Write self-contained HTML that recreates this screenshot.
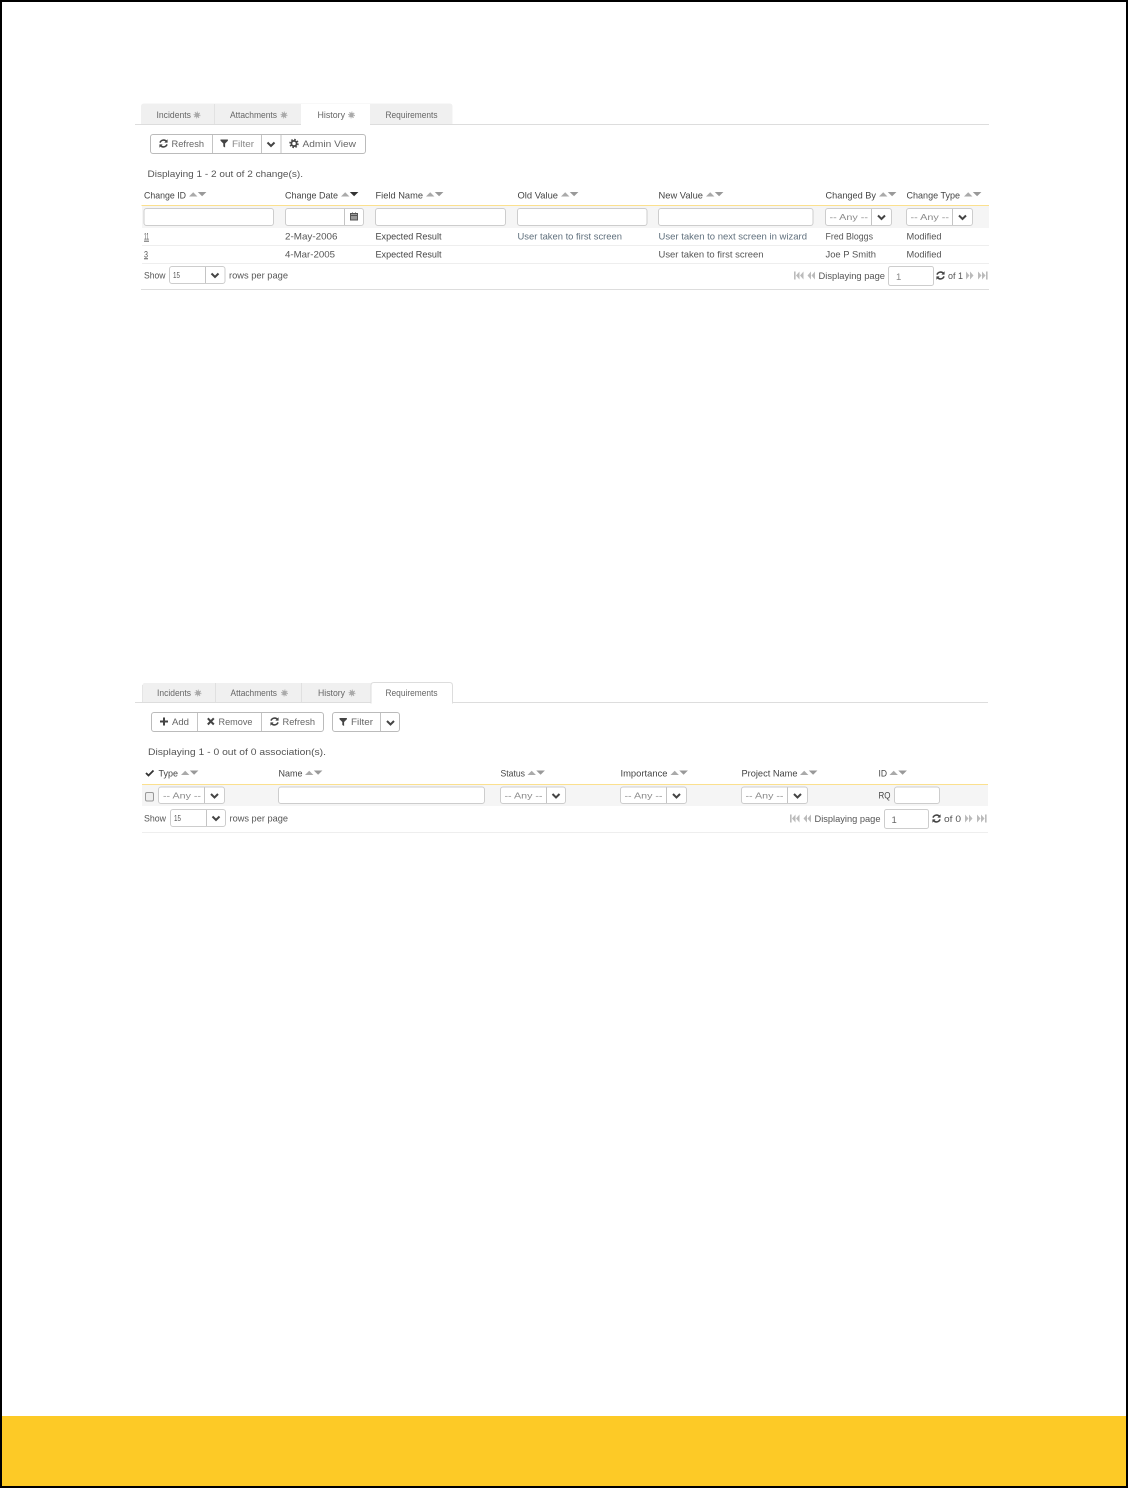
<!DOCTYPE html>
<html><head><meta charset="utf-8"><title>History and Requirements</title>
<style>
html,body{margin:0;padding:0;background:#fff}
svg{display:block}
text{font-family:"Liberation Sans",sans-serif;font-size:9.5px;fill:#555}
.t{fill:#666}.h{fill:#444}.b{fill:#444}.g{fill:#888}.k{fill:#666}
.any{font-size:8.6px;fill:#888}
.box{fill:#fff;stroke:#cdcdcd;stroke-width:1}
.btn{fill:#fff;stroke:#bbb;stroke-width:1}
.sep{stroke:#c4c4c4;stroke-width:1}
.ln{stroke:#ddd;stroke-width:1}
.rw{stroke:#eee;stroke-width:1}
.yl{stroke:#fbe08e;stroke-width:1}
.tab{fill:#f0f0f0}
</style></head>
<body>
<svg width="1128" height="1488" viewBox="0 0 1128 1488" xmlns="http://www.w3.org/2000/svg">
<defs>
<g id="sort"><path d="M0 4.5L4.2 0.2L8.4 4.5Z" fill="#aaa"/><path d="M8.8 0H17.4L13.1 4.3Z" fill="#999"/></g>
<g id="sortd"><path d="M0 4.5L4.2 0.2L8.4 4.5Z" fill="#aaa"/><path d="M8.8 0H17.4L13.1 4.3Z" fill="#333"/></g>
<path id="chev" d="M1 1L4.5 4.5L8 1" fill="none" stroke="#444" stroke-width="2"/>
<g id="ref" fill="none" stroke="#444" stroke-width="1.6"><path d="M1 3.6A3.8 3.8 0 0 1 7.6 2.6"/><path d="M8 5.4A3.8 3.8 0 0 1 1.4 6.4"/><path d="M8.6 0.3V3.6H5.4Z" fill="#444" stroke="none"/><path d="M0.4 8.7V5.4H3.6Z" fill="#444" stroke="none"/></g>
<path id="fil" d="M0 0H7.4V1.2L4.6 4V8L2.8 7V4L0 1.2Z" fill="#444"/>
<g id="gear"><circle cx="4.5" cy="4.5" r="2.6" fill="none" stroke="#444" stroke-width="1.7"/><circle cx="4.5" cy="4.5" r="4" fill="none" stroke="#444" stroke-width="1.4" stroke-dasharray="1.6 1.55"/></g>
<g id="tg"><circle cx="3" cy="3" r="2.3" fill="#aaa"/><circle cx="3" cy="3" r="2.9" fill="none" stroke="#aaa" stroke-width="1" stroke-dasharray="1.1 1.1"/></g>
<g id="first" fill="#bbb"><rect x="0" y="0" width="1.6" height="8"/><path d="M5.5 0V8L2 4Z"/><path d="M9.5 0V8L6 4Z"/></g>
<g id="prev" fill="#bbb"><path d="M4 0V8L0.5 4Z"/><path d="M8 0V8L4.5 4Z"/></g>
<g id="next" fill="#bbb"><path d="M0 0V8L3.5 4Z"/><path d="M4 0V8L7.5 4Z"/></g>
<g id="last" fill="#bbb"><path d="M0 0V8L3.5 4Z"/><path d="M4 0V8L7.5 4Z"/><rect x="8" y="0" width="1.6" height="8"/></g>
</defs>

<!-- frame -->
<rect x="0" y="1416" width="1128" height="72" fill="#fdca26"/>
<rect x="0" y="0" width="1128" height="2" fill="#000"/>
<rect x="0" y="1486" width="1128" height="2" fill="#000"/>
<rect x="0" y="0" width="2" height="1488" fill="#000"/>
<rect x="1126" y="0" width="2" height="1488" fill="#000"/>

<!-- FIRST PANEL -->
<path class="tab" d="M141 124V106.5Q141 103.5 144 103.5H449.5Q452.5 103.5 452.5 106.5V124Z"/>
<rect x="301" y="104" width="69" height="21" fill="#fff"/>
<path d="M214.5 104V124" class="sep" stroke-opacity=".3"/>
<line x1="135" y1="124.5" x2="301" y2="124.5" class="ln"/><line x1="370" y1="124.5" x2="989" y2="124.5" class="ln"/>
<text class="t" x="156.5" y="118" textLength="34.5" lengthAdjust="spacingAndGlyphs">Incidents</text><use href="#tg" x="194" y="112"/>
<text class="t" x="230" y="118" textLength="47" lengthAdjust="spacingAndGlyphs">Attachments</text><use href="#tg" x="281" y="112"/>
<text class="t" x="317.5" y="118" textLength="27.5" lengthAdjust="spacingAndGlyphs">History</text><use href="#tg" x="348.5" y="112"/>
<text class="t" x="385.5" y="118" textLength="52" lengthAdjust="spacingAndGlyphs">Requirements</text>

<rect class="btn" x="150.5" y="134.5" width="215" height="19" rx="2.5"/>
<path class="sep" d="M212.5 135V153M261.5 135V153M281 135V153"/>
<use href="#ref" x="159" y="139"/><text class="k" x="171.5" y="147" textLength="32.5" lengthAdjust="spacingAndGlyphs">Refresh</text>
<use href="#fil" x="220.5" y="139.5"/><text class="g" x="232" y="147" textLength="22" lengthAdjust="spacingAndGlyphs">Filter</text>
<use href="#chev" x="266.5" y="141.5"/>
<use href="#gear" x="289.5" y="139"/><text class="k" x="302.5" y="147" textLength="53.5" lengthAdjust="spacingAndGlyphs">Admin View</text>

<text x="147.5" y="177" textLength="155.5" lengthAdjust="spacingAndGlyphs">Displaying 1 - 2 out of 2 change(s).</text>

<text class="h" x="144" y="198.5" textLength="42" lengthAdjust="spacingAndGlyphs">Change ID</text><use href="#sort" x="189" y="192"/>
<text class="h" x="285" y="198.5" textLength="53" lengthAdjust="spacingAndGlyphs">Change Date</text><use href="#sortd" x="341" y="192"/>
<text class="h" x="375.5" y="198.5" textLength="47.5" lengthAdjust="spacingAndGlyphs">Field Name</text><use href="#sort" x="426" y="192"/>
<text class="h" x="517.5" y="198.5" textLength="40.5" lengthAdjust="spacingAndGlyphs">Old Value</text><use href="#sort" x="561" y="192"/>
<text class="h" x="658.5" y="198.5" textLength="44.5" lengthAdjust="spacingAndGlyphs">New Value</text><use href="#sort" x="706" y="192"/>
<text class="h" x="825.5" y="198.5" textLength="50.5" lengthAdjust="spacingAndGlyphs">Changed By</text><use href="#sort" x="879" y="192"/>
<text class="h" x="906.5" y="198.5" textLength="53.5" lengthAdjust="spacingAndGlyphs">Change Type</text><use href="#sort" x="964" y="192"/>

<rect x="142" y="206" width="847" height="22" fill="#f5f5f5"/>
<line x1="141.5" y1="205.5" x2="989" y2="205.5" class="yl"/>
<rect class="box" x="144" y="208.5" width="129.5" height="17" rx="2.5"/>
<rect class="box" x="285.5" y="208.5" width="78" height="17" rx="2.5"/><path class="sep" d="M344.5 209V225"/>
<g fill="none" stroke="#555" stroke-width="1"><rect x="350.5" y="213.5" width="7" height="6.5" fill="#999"/><path d="M350.5 215.5H357.5M352.5 212.5V214M355.5 212.5V214"/></g>
<rect class="box" x="375.5" y="208.5" width="130" height="17" rx="2.5"/>
<rect class="box" x="517.5" y="208.5" width="129.5" height="17" rx="2.5"/>
<rect class="box" x="658.5" y="208.5" width="154.5" height="17" rx="2.5"/>
<rect class="box" x="825.5" y="208.5" width="66" height="17" rx="2.5"/><path class="sep" d="M871.5 209V225"/><use href="#chev" x="877" y="214.5"/>
<text class="any" x="829.5" y="220" textLength="38.5" lengthAdjust="spacingAndGlyphs">-- Any --</text>
<rect class="box" x="906.5" y="208.5" width="66" height="17" rx="2.5"/><path class="sep" d="M952.5 209V225"/><use href="#chev" x="958" y="214.5"/>
<text class="any" x="910.5" y="220" textLength="38.5" lengthAdjust="spacingAndGlyphs">-- Any --</text>

<text x="144" y="239.7" textLength="5" lengthAdjust="spacingAndGlyphs" text-decoration="underline">11</text>
<text x="285" y="239.7" textLength="52.5" lengthAdjust="spacingAndGlyphs">2-May-2006</text>
<text class="b" x="375.5" y="239.7" textLength="66" lengthAdjust="spacingAndGlyphs">Expected Result</text>
<text x="517.5" y="239.7" textLength="104.5" lengthAdjust="spacingAndGlyphs" style="fill:#5f6f7c">User taken to first screen</text>
<text x="658.5" y="239.7" textLength="148.5" lengthAdjust="spacingAndGlyphs" style="fill:#5f6f7c">User taken to next screen in wizard</text>
<text x="825.5" y="239.7" textLength="47.5" lengthAdjust="spacingAndGlyphs">Fred Bloggs</text>
<text x="906.5" y="239.7" textLength="35" lengthAdjust="spacingAndGlyphs">Modified</text>
<line x1="142" y1="245.5" x2="989" y2="245.5" class="rw"/>
<text x="144" y="257.3" textLength="4" lengthAdjust="spacingAndGlyphs" text-decoration="underline">3</text>
<text x="285" y="257.3" textLength="50" lengthAdjust="spacingAndGlyphs">4-Mar-2005</text>
<text class="b" x="375.5" y="257.3" textLength="66" lengthAdjust="spacingAndGlyphs">Expected Result</text>
<text x="658.5" y="257.3" textLength="105" lengthAdjust="spacingAndGlyphs">User taken to first screen</text>
<text x="825.5" y="257.3" textLength="50.5" lengthAdjust="spacingAndGlyphs">Joe P Smith</text>
<text x="906.5" y="257.3" textLength="35" lengthAdjust="spacingAndGlyphs">Modified</text>
<line x1="142" y1="263.5" x2="989" y2="263.5" class="rw"/>

<text x="144" y="278.5" textLength="21.5" lengthAdjust="spacingAndGlyphs">Show</text>
<rect class="box" x="169.5" y="266.5" width="55.5" height="17" rx="2.5"/><path class="sep" d="M205.5 267V283"/><use href="#chev" x="210.5" y="272.5"/>
<text x="173" y="278" textLength="7" lengthAdjust="spacingAndGlyphs" style="font-size:8px">15</text>
<text x="229" y="278.5" textLength="59" lengthAdjust="spacingAndGlyphs">rows per page</text>
<use href="#first" x="794" y="271.5"/><use href="#prev" x="807" y="271.5"/>
<text x="818.5" y="279" textLength="66.5" lengthAdjust="spacingAndGlyphs">Displaying page</text>
<rect class="box" x="888.5" y="266.5" width="45" height="19" rx="2"/>
<text class="g" x="896" y="280">1</text>
<use href="#ref" x="936" y="271"/>
<text x="948" y="279" textLength="15" lengthAdjust="spacingAndGlyphs">of 1</text>
<use href="#next" x="966" y="271.5"/><use href="#last" x="978" y="271.5"/>
<line x1="141" y1="289.5" x2="989" y2="289.5" class="ln"/>

<!-- SECOND PANEL -->
<path class="tab" d="M142.5 702V685.5Q142.5 683 145 683H371V702Z"/>
<path d="M371 703V685.5Q371 682.5 374 682.5H449.5Q452.5 682.5 452.5 685.5V703Z" fill="#fff" stroke="#ddd"/>
<path d="M215.5 683V702M301.5 683V702M142.5 702V685" class="sep" stroke-opacity=".35"/>
<line x1="135" y1="702.5" x2="371" y2="702.5" class="ln"/><line x1="452.5" y1="702.5" x2="988" y2="702.5" class="ln"/>
<rect x="371.5" y="701" width="80.5" height="3" fill="#fff"/>
<text class="t" x="157" y="696" textLength="34" lengthAdjust="spacingAndGlyphs">Incidents</text><use href="#tg" x="195" y="690"/>
<text class="t" x="230.5" y="696" textLength="46.5" lengthAdjust="spacingAndGlyphs">Attachments</text><use href="#tg" x="281.5" y="690"/>
<text class="t" x="318" y="696" textLength="27" lengthAdjust="spacingAndGlyphs">History</text><use href="#tg" x="349" y="690"/>
<text class="t" x="385.5" y="696" textLength="52" lengthAdjust="spacingAndGlyphs">Requirements</text>

<rect class="btn" x="151.5" y="712.5" width="172" height="19" rx="2.5"/>
<path class="sep" d="M197.5 713V731M261.5 713V731"/>
<path d="M164 717.5V725.5M160 721.5H168" stroke="#444" stroke-width="2"/>
<text class="k" x="172" y="725" textLength="17" lengthAdjust="spacingAndGlyphs">Add</text>
<path d="M207.8 718.3L213.8 724.5M213.8 718.3L207.8 724.5" stroke="#444" stroke-width="2"/>
<text class="k" x="218.5" y="725" textLength="34" lengthAdjust="spacingAndGlyphs">Remove</text>
<use href="#ref" x="270" y="717"/><text class="k" x="282.5" y="725" textLength="32.5" lengthAdjust="spacingAndGlyphs">Refresh</text>
<rect class="btn" x="332.5" y="712.5" width="67" height="19" rx="2.5"/><path class="sep" d="M380.5 713V731"/>
<use href="#fil" x="339.5" y="718"/><text class="k" x="351" y="725" textLength="22" lengthAdjust="spacingAndGlyphs">Filter</text>
<use href="#chev" x="386" y="720"/>

<text x="148" y="755" textLength="178" lengthAdjust="spacingAndGlyphs">Displaying 1 - 0 out of 0 association(s).</text>

<path d="M146 773L148.5 775.5L153.5 770.5" fill="none" stroke="#333" stroke-width="1.8"/>
<text class="h" x="158.5" y="776.5" textLength="19.5" lengthAdjust="spacingAndGlyphs">Type</text><use href="#sort" x="181" y="770.5"/>
<text class="h" x="278.5" y="776.5" textLength="24" lengthAdjust="spacingAndGlyphs">Name</text><use href="#sort" x="305" y="770.5"/>
<text class="h" x="500.5" y="776.5" textLength="24.5" lengthAdjust="spacingAndGlyphs">Status</text><use href="#sort" x="527.5" y="770.5"/>
<text class="h" x="620.5" y="776.5" textLength="47" lengthAdjust="spacingAndGlyphs">Importance</text><use href="#sort" x="670.5" y="770.5"/>
<text class="h" x="741.5" y="776.5" textLength="56" lengthAdjust="spacingAndGlyphs">Project Name</text><use href="#sort" x="800" y="770.5"/>
<text class="h" x="878.5" y="776.5" textLength="8.5" lengthAdjust="spacingAndGlyphs">ID</text><use href="#sort" x="889.5" y="770.5"/>

<rect x="142" y="785" width="846" height="21" fill="#f5f5f5"/>
<line x1="142" y1="784.5" x2="988" y2="784.5" class="yl"/>
<rect x="145.5" y="792.5" width="8" height="8.5" rx="1.5" fill="#eee" stroke="#999"/>
<rect class="box" x="158.5" y="787" width="66" height="16.5" rx="2.5"/><path class="sep" d="M204.5 787.5V803"/><use href="#chev" x="210" y="793"/>
<text class="any" x="163" y="798.5" textLength="38" lengthAdjust="spacingAndGlyphs">-- Any --</text>
<rect class="box" x="278.5" y="787" width="206" height="16.5" rx="2.5"/>
<rect class="box" x="500.5" y="787" width="65" height="16.5" rx="2.5"/><path class="sep" d="M546.5 787.5V803"/><use href="#chev" x="551.5" y="793"/>
<text class="any" x="504.5" y="798.5" textLength="38" lengthAdjust="spacingAndGlyphs">-- Any --</text>
<rect class="box" x="620.5" y="787" width="66" height="16.5" rx="2.5"/><path class="sep" d="M666.5 787.5V803"/><use href="#chev" x="672" y="793"/>
<text class="any" x="624.5" y="798.5" textLength="38" lengthAdjust="spacingAndGlyphs">-- Any --</text>
<rect class="box" x="741.5" y="787" width="66" height="16.5" rx="2.5"/><path class="sep" d="M787.5 787.5V803"/><use href="#chev" x="793" y="793"/>
<text class="any" x="745.5" y="798.5" textLength="38" lengthAdjust="spacingAndGlyphs">-- Any --</text>
<text class="b" x="878.5" y="798.5" textLength="12" lengthAdjust="spacingAndGlyphs">RQ</text>
<rect class="box" x="894.5" y="787" width="45" height="16.5" rx="2.5"/>

<text x="144" y="821.5" textLength="22" lengthAdjust="spacingAndGlyphs">Show</text>
<rect class="box" x="170.5" y="809.5" width="55" height="17" rx="2.5"/><path class="sep" d="M206.5 810V826"/><use href="#chev" x="211.5" y="815.5"/>
<text x="174" y="821" textLength="7" lengthAdjust="spacingAndGlyphs" style="font-size:8px">15</text>
<text x="229.5" y="821.5" textLength="58.5" lengthAdjust="spacingAndGlyphs">rows per page</text>
<use href="#first" x="790" y="814.5"/><use href="#prev" x="803" y="814.5"/>
<text x="814.5" y="822" textLength="66" lengthAdjust="spacingAndGlyphs">Displaying page</text>
<rect class="box" x="884.5" y="809.5" width="44" height="19" rx="2"/>
<text class="k" x="891.5" y="823">1</text>
<use href="#ref" x="932" y="814"/>
<text x="944" y="822" textLength="17" lengthAdjust="spacingAndGlyphs">of 0</text>
<use href="#next" x="965" y="814.5"/><use href="#last" x="977" y="814.5"/>
<line x1="142" y1="832.5" x2="988" y2="832.5" class="rw"/>
</svg>
</body></html>
